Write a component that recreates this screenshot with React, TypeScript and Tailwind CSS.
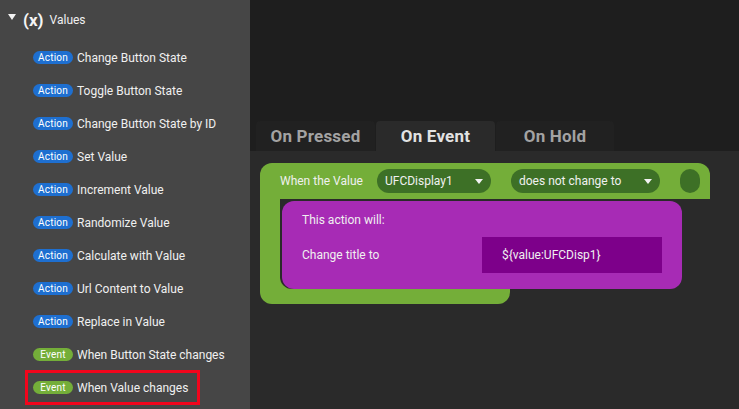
import React from 'react';

const items = [
  { kind: 'Action', label: 'Change Button State' },
  { kind: 'Action', label: 'Toggle Button State' },
  { kind: 'Action', label: 'Change Button State by ID' },
  { kind: 'Action', label: 'Set Value' },
  { kind: 'Action', label: 'Increment Value' },
  { kind: 'Action', label: 'Randomize Value' },
  { kind: 'Action', label: 'Calculate with Value' },
  { kind: 'Action', label: 'Url Content to Value' },
  { kind: 'Action', label: 'Replace in Value' },
  { kind: 'Event', label: 'When Button State changes' },
  { kind: 'Event', label: 'When Value changes', marked: true },
];

function Caret() {
  return (
    <svg width="8" height="5" viewBox="0 0 8 5" className="shrink-0">
      <path d="M0 0 H8 L4 5 Z" fill="#f2f2f2" />
    </svg>
  );
}

function Select({ label, width }: { label: string; width: string }) {
  return (
    <div className={`flex h-6 items-center justify-between rounded-xl bg-[#3d7026] pr-2 pl-2 ${width}`}>
      <span>{label}</span>
      <Caret />
    </div>
  );
}

export default function App() {
  return (
    <div className="flex h-[409px] w-[739px] overflow-hidden bg-[#2a2a2a] font-['Roboto',sans-serif] text-xs text-[#f0f0f0]">
      <aside className="w-[250px] shrink-0 bg-[#464646]">
        <div className="flex h-[41px] items-center pb-[1px] pl-2">
          <svg width="8" height="6" viewBox="0 0 8 6" className="mb-[6px] shrink-0">
            <path d="M0 0 H8 L4 6 Z" fill="#f2f2f2" />
          </svg>
          <span className="ml-[7px] text-[17px] leading-none font-bold text-[#f5f5f5]">(x)</span>
          <span className="ml-[6px]">Values</span>
        </div>
        <ul>
          {items.map((it) => (
            <li key={it.label} className="relative flex h-[33px] items-center pl-[33px]">
              <span
                className={`flex h-[13px] w-10 items-center justify-center rounded-full text-[10px] leading-none tracking-[0.2px] text-white ${
                  it.kind === 'Action' ? 'bg-[#1e6fd0]' : 'bg-[#74ae39]'
                }`}
              >
                {it.kind}
              </span>
              <span className="ml-1">{it.label}</span>
              {it.marked && (
                <span className="absolute top-[-1px] left-[25px] h-[35px] w-[175px] border-[3px] border-[#f2051c]" />
              )}
            </li>
          ))}
        </ul>
      </aside>

      <main className="min-w-0 flex-1">
        <div className="flex h-[151px] items-end bg-[#1e1e1e] pl-[6px]">
          <div className="flex h-[30px] gap-px text-[17px] font-bold tracking-[0.2px]">
            <div className="flex w-[119px] items-center justify-center rounded-t bg-[#212121] text-[#a3a3a3]">On Pressed</div>
            <div className="flex w-[119px] items-center justify-center rounded-t bg-[#2a2a2a] text-[#e2e2e2]">On Event</div>
            <div className="flex w-[118px] items-center justify-center rounded-t bg-[#212121] text-[#a3a3a3]">On Hold</div>
          </div>
        </div>

        <div className="pt-3 pl-[10px]">
          <div className="flex h-9 w-[450px] items-center rounded-t-xl bg-[#74ae39] pl-5">
            <span className="w-[97px]">When the Value</span>
            <Select label="UFCDisplay1" width="w-[114px]" />
            <div className="w-5" />
            <Select label="does not change to" width="w-[149px]" />
            <div className="ml-5 h-6 w-5 rounded-[10px] bg-[#3d7026]" />
          </div>
          <div className="h-[105px] w-[250px] rounded-b-xl bg-[#74ae39] pl-5">
            <div className="h-[90px] w-[402px] rounded-bl-xl bg-[#2a2a2a] pt-[2px] pl-[2px]">
              <div className="h-[88px] w-[400px] rounded-xl bg-[#a72bb5] pl-5">
                <div className="flex h-9 items-center pt-[2px]">This action will:</div>
                <div className="flex h-9 items-center">
                  <span className="w-[180px]">Change title to</span>
                  <div className="flex h-9 w-[180px] items-center bg-[#7d008a] pl-5">{'${value:UFCDisp1}'}</div>
                </div>
              </div>
            </div>
          </div>
        </div>
      </main>
    </div>
  );
}
